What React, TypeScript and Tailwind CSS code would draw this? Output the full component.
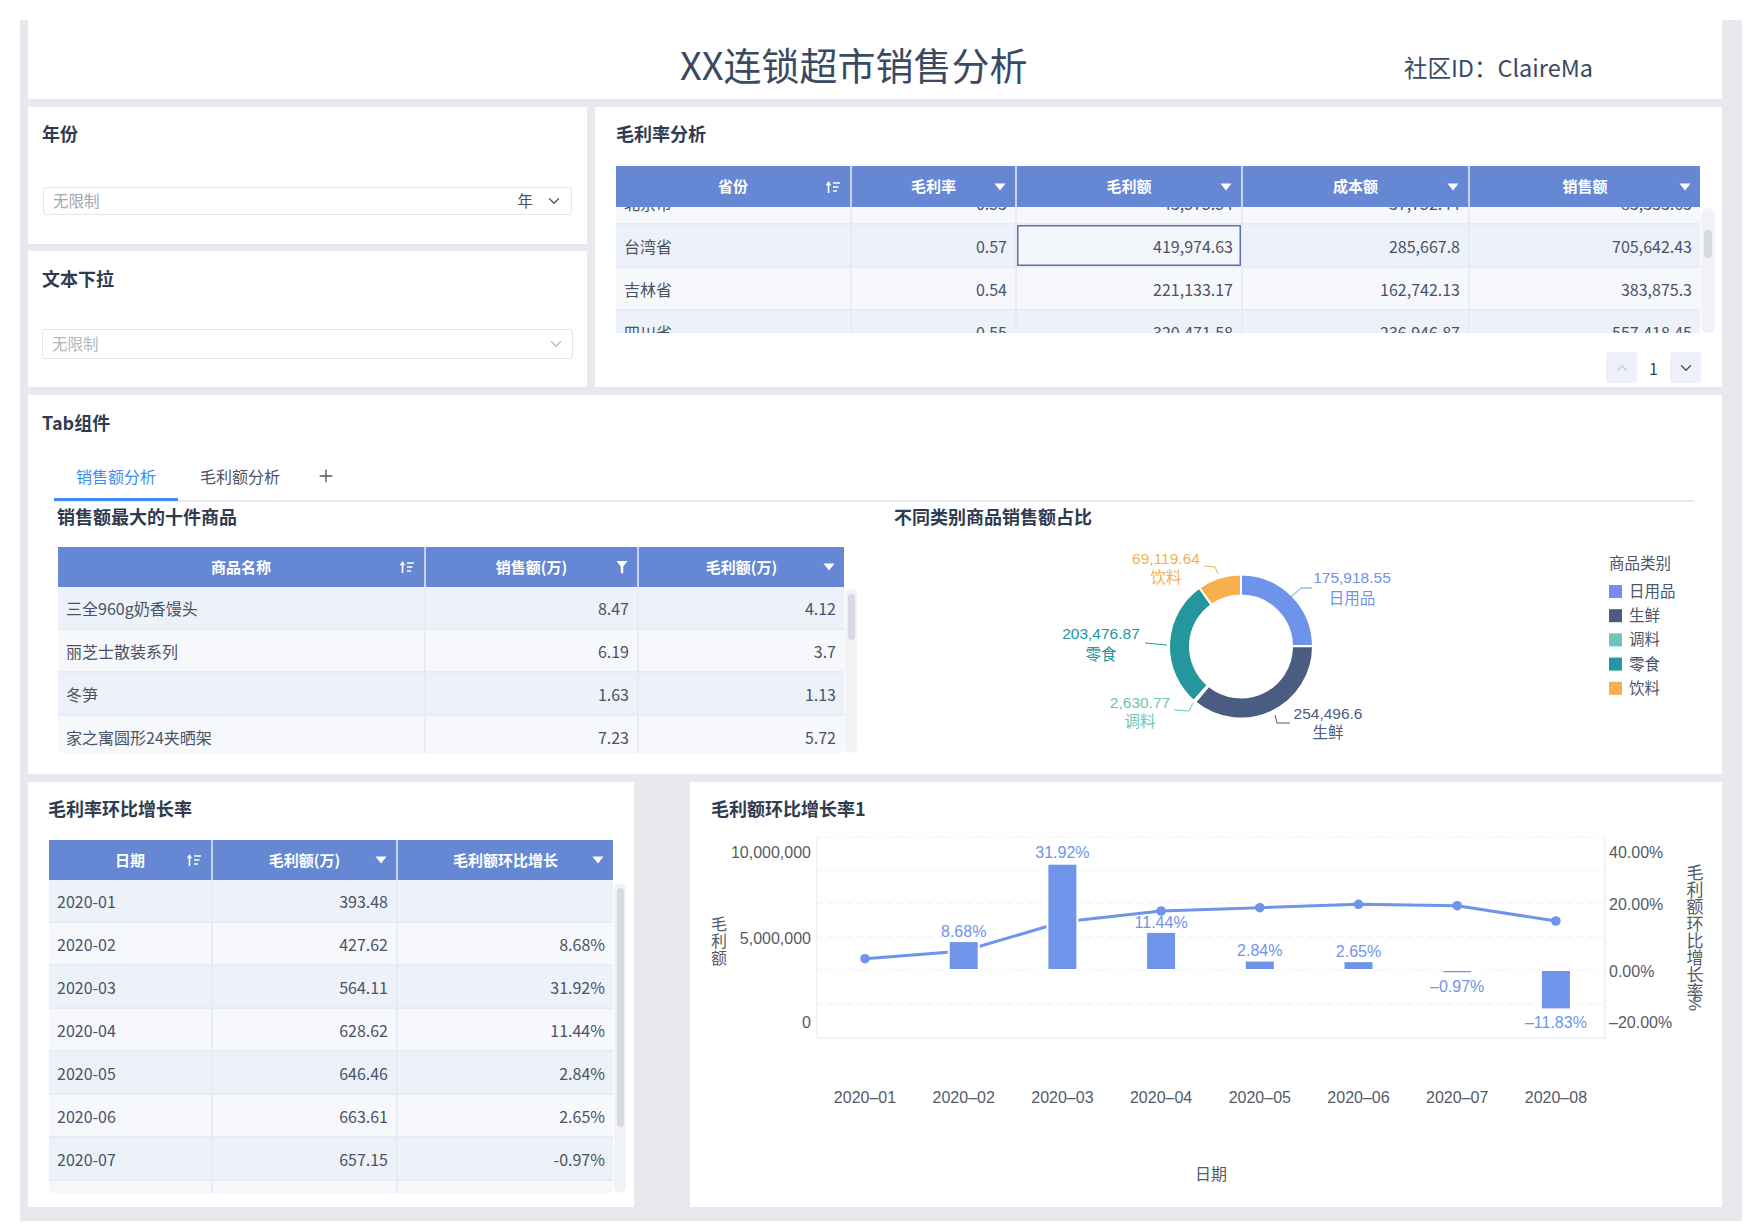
import { ChevronDown, ChevronUp, Plus } from "lucide-react";

type Icon = "sort" | "down" | "filter";
type Col = { title: string; icon: Icon; right?: boolean };

function SortIcon() {
  return (
    <svg width="16" height="14" viewBox="0 0 16 14" fill="none" stroke="white" strokeWidth="1.6">
      <path d="M3.5 13V4" />
      <path d="M0.8 5.2L3.5 1L6.2 5.2Z" fill="white" stroke="none" />
      <path d="M8 3H15M8 7H13.5M8 11H12" />
    </svg>
  );
}

function DownIcon() {
  return (
    <svg width="12" height="8" viewBox="0 0 12 8">
      <path d="M0.5 0.5H11.5L6 7.5Z" fill="white" />
    </svg>
  );
}

function FilterIcon() {
  return (
    <svg width="12" height="15" viewBox="0 0 12 15">
      <path d="M0.5 1H11.5L7.2 6.5V14L4.8 12.6V6.5Z" fill="white" />
    </svg>
  );
}

function HeadIcon({ icon }: { icon: Icon }) {
  if (icon === "sort") return <SortIcon />;
  if (icon === "filter") return <FilterIcon />;
  return <DownIcon />;
}

function DataTable({
  cols,
  grid,
  rows,
  firstDark,
  headH,
  bodyH,
  shift,
  track,
  thumb,
  selected,
}: {
  cols: Col[];
  grid: string;
  rows: string[][];
  firstDark: boolean;
  headH: string;
  bodyH: string;
  shift: string;
  track: string;
  thumb: string;
  selected?: [number, number];
}) {
  return (
    <div className="flex items-start">
      <div>
        <div className={`grid ${grid} ${headH} bg-[#6688d4] text-white text-[15px] font-bold`}>
          {cols.map((c) => (
            <div key={c.title} className="flex items-center px-[9px] border-r-2 border-[#c6d3ef] last:border-r-0">
              <span className="w-[16px]" />
              <span className="flex-1 text-center">{c.title}</span>
              <span className="w-[16px] flex justify-end">
                <HeadIcon icon={c.icon} />
              </span>
            </div>
          ))}
        </div>
        <div className={`${bodyH} overflow-hidden`}>
          <div className={shift}>
            {rows.map((r, i) => {
              const dark = (i % 2 === 0) === firstDark;
              return (
                <div key={i} className={`grid ${grid} h-[43px] ${dark ? "bg-[#edf1f9]" : "bg-[#f6f8fc]"}`}>
                  {r.map((v, j) => {
                    const sel = selected && selected[0] === i && selected[1] === j;
                    return (
                      <div
                        key={j}
                        className={`flex items-center px-[8px] text-[16px] border-r-2 border-b-2 border-[#e6ebf5] last:border-r-0 ${
                          cols[j].right ? "justify-end" : ""
                        } ${sel ? "ring-[1.5px] ring-inset ring-[#5a74ab] bg-[#f3f6fb]" : ""}`}
                      >
                        {v}
                      </div>
                    );
                  })}
                </div>
              );
            })}
          </div>
        </div>
      </div>
      <div className={`ml-[1px] rounded-[7px] bg-[#f1f2f5] flex justify-center ${track}`}>
        <div className={`rounded-[4px] bg-[#d7dae0] ${thumb}`} />
      </div>
    </div>
  );
}

const donut = [
  { name: "日用品", value: 175918.55, label: "175,918.55", color: "#6d93ea" },
  { name: "生鲜", value: 254496.6, label: "254,496.6", color: "#4b5c82" },
  { name: "调料", value: 2630.77, label: "2,630.77", color: "#6cc5b9" },
  { name: "零食", value: 203476.87, label: "203,476.87", color: "#23969e" },
  { name: "饮料", value: 69119.64, label: "69,119.64", color: "#f8b04e" },
];

function arcPath(cx: number, cy: number, r0: number, r1: number, a0: number, a1: number) {
  const p = (r: number, a: number) => [cx + r * Math.sin(a), cy - r * Math.cos(a)];
  const large = a1 - a0 > Math.PI ? 1 : 0;
  const [x0, y0] = p(r1, a0);
  const [x1, y1] = p(r1, a1);
  const [x2, y2] = p(r0, a1);
  const [x3, y3] = p(r0, a0);
  return `M${x0} ${y0}A${r1} ${r1} 0 ${large} 1 ${x1} ${y1}L${x2} ${y2}A${r0} ${r0} 0 ${large} 0 ${x3} ${y3}Z`;
}

// label placement: [x, valueBaseline, nameBaseline, leader points]
const donutLabels: Record<string, [number, number, number, string]> = {
  日用品: [472, 48, 69, "411,62 421,53 432,53"],
  生鲜: [448, 184, 203, "395,180 397,188 410,188"],
  调料: [260, 173, 192, "294,175 309,176 313,168"],
  零食: [221, 104, 125, "265,108 287,110"],
  饮料: [286, 29, 48, "324,31 335,32 338,39"],
};

function Donut() {
  const total = donut.reduce((s, d) => s + d.value, 0);
  let acc = 0;
  const cx = 361;
  const cy = 111.5;
  return (
    <svg width="840" height="235" className="block font-['Liberation_Sans','Noto_Sans_CJK_SC',sans-serif]">
      {donut.map((d) => {
        const a0 = (acc / total) * Math.PI * 2;
        acc += d.value;
        const a1 = (acc / total) * Math.PI * 2;
        return (
          <path key={d.name} d={arcPath(cx, cy, 51, 72, a0, a1)} fill={d.color} stroke="white" strokeWidth="2" />
        );
      })}
      {donut.map((d) => {
        const [x, y1, y2, pts] = donutLabels[d.name];
        return (
          <g key={d.name} fill={d.color}>
            <polyline points={pts} fill="none" stroke={d.color} strokeWidth="1" />
            <text x={x} y={y1} fontSize="15.5" textAnchor="middle">
              {d.label}
            </text>
            <text x={x} y={y2} fontSize="15.5" textAnchor="middle">
              {d.name}
            </text>
          </g>
        );
      })}
      <text x="729" y="34" fontSize="15.5" fill="#4b5565">
        商品类别
      </text>
      {donut.map((d, i) => (
        <g key={d.name}>
          <rect x="729" y={50 + i * 24.2} width="13" height="13" fill={d.color} />
          <text x="749" y={62 + i * 24.2} fontSize="15.5" fill="#4b5565">
            {d.name}
          </text>
        </g>
      ))}
    </svg>
  );
}

const months = ["2020–01", "2020–02", "2020–03", "2020–04", "2020–05", "2020–06", "2020–07", "2020–08"];
const growth: (number | null)[] = [null, 8.68, 31.92, 11.44, 2.84, 2.65, -0.97, -11.83];
const lineY = [127.7, 120, 91, 80, 76.7, 73.3, 74.7, 90];
const labelY = [0, 106, 27, 96.7, 125, 126, 161, 196.7];

function ComboChart() {
  const cx = (i: number) => 175 + i * 98.7;
  const zero = 139;
  const blue = "#6f94ea";
  const pts = lineY.map((y, i) => `${cx(i)},${y}`).join(" ");
  const rightTitle = "毛利额环比增长率".split("");
  return (
    <svg width="1032" height="376" className="block font-['Liberation_Sans','Noto_Sans_CJK_SC',sans-serif]">
      {[6, 39, 72, 106, 139, 173].map((y) => (
        <line key={y} x1="127" x2="915" y1={y} y2={y} stroke="#eef0f4" strokeDasharray="6 4" />
      ))}
      <path d="M127 6V207H915V6" fill="none" stroke="#eceef2" strokeWidth="1.5" />
      <g fill="#555b66" fontSize="16">
        <text x="121" y="27" textAnchor="end">10,000,000</text>
        <text x="121" y="113" textAnchor="end">5,000,000</text>
        <text x="121" y="197" textAnchor="end">0</text>
        <text x="919" y="27">40.00%</text>
        <text x="919" y="79">20.00%</text>
        <text x="919" y="146">0.00%</text>
        <text x="919" y="197">–20.00%</text>
        {["毛", "利", "额"].map((c, i) => (
          <text key={c} x="29" y={99 + i * 17} textAnchor="middle">
            {c}
          </text>
        ))}
        {rightTitle.map((c, i) => (
          <text key={i} x="1005" y={47.5 + i * 17} textAnchor="middle" fontSize="17">
            {c}
          </text>
        ))}
        <text x="1005" y={47.5 + 8 * 17 - 5} fontSize="17" textAnchor="middle" transform={`rotate(90 1005 ${47.5 + 8 * 17 - 11})`}>
          %
        </text>
        {months.map((m, i) => (
          <text key={m} x={cx(i)} y="272" textAnchor="middle">
            {m}
          </text>
        ))}
        <text x="521" y="349" textAnchor="middle">
          日期
        </text>
      </g>
      <polyline points={pts} fill="none" stroke={blue} strokeWidth="3" />
      {lineY.map((y, i) => (
        <circle key={i} cx={cx(i)} cy={y} r="4.8" fill={blue} />
      ))}
      {growth.map((g, i) => {
        if (g === null) return null;
        const h = Math.abs(g) * 3.33;
        return (
          <rect
            key={i}
            x={cx(i) - 15}
            y={g > 0 ? zero - h : zero}
            width="30"
            height={h}
            fill={blue}
            stroke="white"
            strokeWidth="2"
          />
        );
      })}
      {growth.map((g, i) =>
        g === null ? null : (
          <text key={i} x={cx(i)} y={labelY[i]} textAnchor="middle" fontSize="16" fill={blue}>
            {g < 0 ? `–${Math.abs(g).toFixed(2)}%` : `${g.toFixed(2)}%`}
          </text>
        )
      )}
    </svg>
  );
}

export default function App() {
  return (
    <div className="w-[1764px] h-[1232px] bg-white font-['Noto_Sans_CJK_SC',sans-serif] text-[#4a5365]">
      <div className="ml-[20px] mt-[20px] w-[1722px] h-[1201px] bg-[#e8e9ee] pl-[8px] pr-[20px] flex flex-col gap-[8px]">
        {/* header */}
        <header className="h-[79px] shrink-0 bg-white flex items-center justify-between pl-[652px] pr-[129px] pt-[9px]">
          <h1 className="text-[38px] leading-none tracking-[0px] text-[#3b4a63]">XX连锁超市销售分析</h1>
          <div className="text-[23.5px] leading-none text-[#3b4a63] mt-[8px]">社区ID：ClaireMa</div>
        </header>

        {/* filters + gross margin table */}
        <div className="flex gap-[8px] h-[280px] shrink-0">
          <div className="w-[559px] flex flex-col gap-[7px]">
            <div className="h-[137px] bg-white px-[14px] pt-[14px]">
              <div className="text-[18px] leading-[24px] font-bold text-[#2f3b4f]">年份</div>
              <div className="mt-[42px] ml-[1px] w-[529px] h-[28px] border border-[#e3e5ea] rounded-[3px] flex items-center pl-[9px] pr-[8px] text-[15.5px]">
                <span className="text-[#a3a6ab]">无限制</span>
                <span className="ml-auto text-[#4a5365]">年</span>
                <ChevronDown className="ml-[12px] w-[18px] h-[18px] text-[#4a5365]" strokeWidth={1.6} />
              </div>
            </div>
            <div className="flex-1 bg-white px-[14px] pt-[15px]">
              <div className="text-[18px] leading-[24px] font-bold text-[#2f3b4f]">文本下拉</div>
              <div className="mt-[39px] w-[531px] h-[30px] border border-[#e3e5ea] rounded-[3px] flex items-center pl-[9px] pr-[7px] text-[15.5px]">
                <span className="text-[#b3b6bb]">无限制</span>
                <ChevronDown className="ml-auto w-[18px] h-[18px] text-[#b9bcc2]" strokeWidth={1.6} />
              </div>
            </div>
          </div>

          <div className="flex-1 bg-white pl-[21px] pt-[14px]">
            <div className="text-[18px] leading-[24px] font-bold text-[#2f3b4f]">毛利率分析</div>
            <div className="mt-[21px]">
              <DataTable
                cols={[
                  { title: "省份", icon: "sort" },
                  { title: "毛利率", icon: "down", right: true },
                  { title: "毛利额", icon: "down", right: true },
                  { title: "成本额", icon: "down", right: true },
                  { title: "销售额", icon: "down", right: true },
                ]}
                grid="grid-cols-[236px_165px_226px_227px_230px]"
                rows={[
                  ["北京市", "0.53", "43,575.54", "37,752.44", "83,333.63"],
                  ["台湾省", "0.57", "419,974.63", "285,667.8", "705,642.43"],
                  ["吉林省", "0.54", "221,133.17", "162,742.13", "383,875.3"],
                  ["四川省", "0.55", "320,471.58", "236,946.87", "557,418.45"],
                ]}
                firstDark={false}
                headH="h-[41px]"
                bodyH="h-[126px]"
                shift="-mt-[25px]"
                track="mt-[42px] w-[14px] h-[125px]"
                thumb="mt-[22px] w-[8px] h-[28px]"
                selected={[1, 2]}
              />
            </div>
            <div className="mt-[19px] pr-[21px] flex items-center justify-end gap-[12px]">
              <div className="w-[31px] h-[31px] rounded-[3px] bg-[#eef1f8] flex items-center justify-center">
                <ChevronUp className="w-[18px] h-[18px] text-[#c8ccd3]" strokeWidth={1.6} />
              </div>
              <span className="text-[16px] text-[#3b4a63]">1</span>
              <div className="w-[31px] h-[31px] rounded-[3px] bg-[#eef1f8] flex items-center justify-center">
                <ChevronDown className="w-[18px] h-[18px] text-[#3b4a63]" strokeWidth={1.6} />
              </div>
            </div>
          </div>
        </div>

        {/* tab component */}
        <div className="h-[379px] shrink-0 bg-white pt-[15px]">
          <div className="pl-[14px] text-[18px] leading-[24px] font-bold text-[#2f3b4f]">Tab组件</div>
          <div className="mt-[32px] ml-[26px] mr-[28px] flex items-start border-b-2 border-[#e8eaef] text-[16px] leading-[20px]">
            <div className="h-[35px] px-[22px] text-[#3f8cf0] border-b-[3px] border-[#3f8cf0] -mb-[2px]">销售额分析</div>
            <div className="h-[34px] px-[22px] text-[#4a5365]">毛利额分析</div>
            <div className="h-[34px] px-[14px] text-[#4a5365]">
              <Plus className="w-[20px] h-[20px]" strokeWidth={1.6} />
            </div>
          </div>
          <div className="ml-[26px] flex">
            <div className="w-[826px]">
              <div className="mt-[2px] ml-[3px] text-[18px] leading-[24px] font-bold text-[#2f3b4f]">
                销售额最大的十件商品
              </div>
              <div className="mt-[19px] ml-[4px]">
                <DataTable
                  cols={[
                    { title: "商品名称", icon: "sort" },
                    { title: "销售额(万)", icon: "filter", right: true },
                    { title: "毛利额(万)", icon: "down", right: true },
                  ]}
                  grid="grid-cols-[368px_213px_205px]"
                  rows={[
                    ["三全960g奶香馒头", "8.47", "4.12"],
                    ["丽芝士散装系列", "6.19", "3.7"],
                    ["冬笋", "1.63", "1.13"],
                    ["家之寓圆形24夹晒架", "7.23", "5.72"],
                  ]}
                  firstDark={true}
                  headH="h-[40px]"
                  bodyH="h-[166px]"
                  shift=""
                  track="mt-[42px] w-[12px] h-[164px]"
                  thumb="mt-[5px] w-[7px] h-[46px]"
                />
              </div>
            </div>
            <div className="flex-1">
              <div className="mt-[2px] pl-[14px] text-[18px] leading-[24px] font-bold text-[#2f3b4f]">
                不同类别商品销售额占比
              </div>
              <div className="mt-[7px]">
                <Donut />
              </div>
            </div>
          </div>
        </div>

        {/* bottom row */}
        <div className="h-[425px] shrink-0 flex gap-[56px]">
          <div className="w-[606px] bg-white pl-[21px] pt-[14px]">
            <div className="-ml-[1px] text-[18px] leading-[24px] font-bold text-[#2f3b4f]">毛利率环比增长率</div>
            <div className="mt-[20px]">
              <DataTable
                cols={[
                  { title: "日期", icon: "sort" },
                  { title: "毛利额(万)", icon: "down", right: true },
                  { title: "毛利额环比增长", icon: "down", right: true },
                ]}
                grid="grid-cols-[164px_185px_215px]"
                rows={[
                  ["2020-01", "393.48", ""],
                  ["2020-02", "427.62", "8.68%"],
                  ["2020-03", "564.11", "31.92%"],
                  ["2020-04", "628.62", "11.44%"],
                  ["2020-05", "646.46", "2.84%"],
                  ["2020-06", "663.61", "2.65%"],
                  ["2020-07", "657.15", "-0.97%"],
                  ["2020-08", "579.43", "-11.83%"],
                ]}
                firstDark={true}
                headH="h-[40px]"
                bodyH="h-[313px]"
                shift=""
                track="mt-[43px] w-[12px] h-[310px]"
                thumb="mt-[5px] w-[7px] h-[239px]"
              />
            </div>
          </div>
          <div className="flex-1 bg-white pt-[14px]">
            <div className="pl-[21px] text-[18px] leading-[24px] font-bold text-[#2f3b4f]">毛利额环比增长率1</div>
            <div className="mt-[11px]">
              <ComboChart />
            </div>
          </div>
        </div>
      </div>
    </div>
  );
}
